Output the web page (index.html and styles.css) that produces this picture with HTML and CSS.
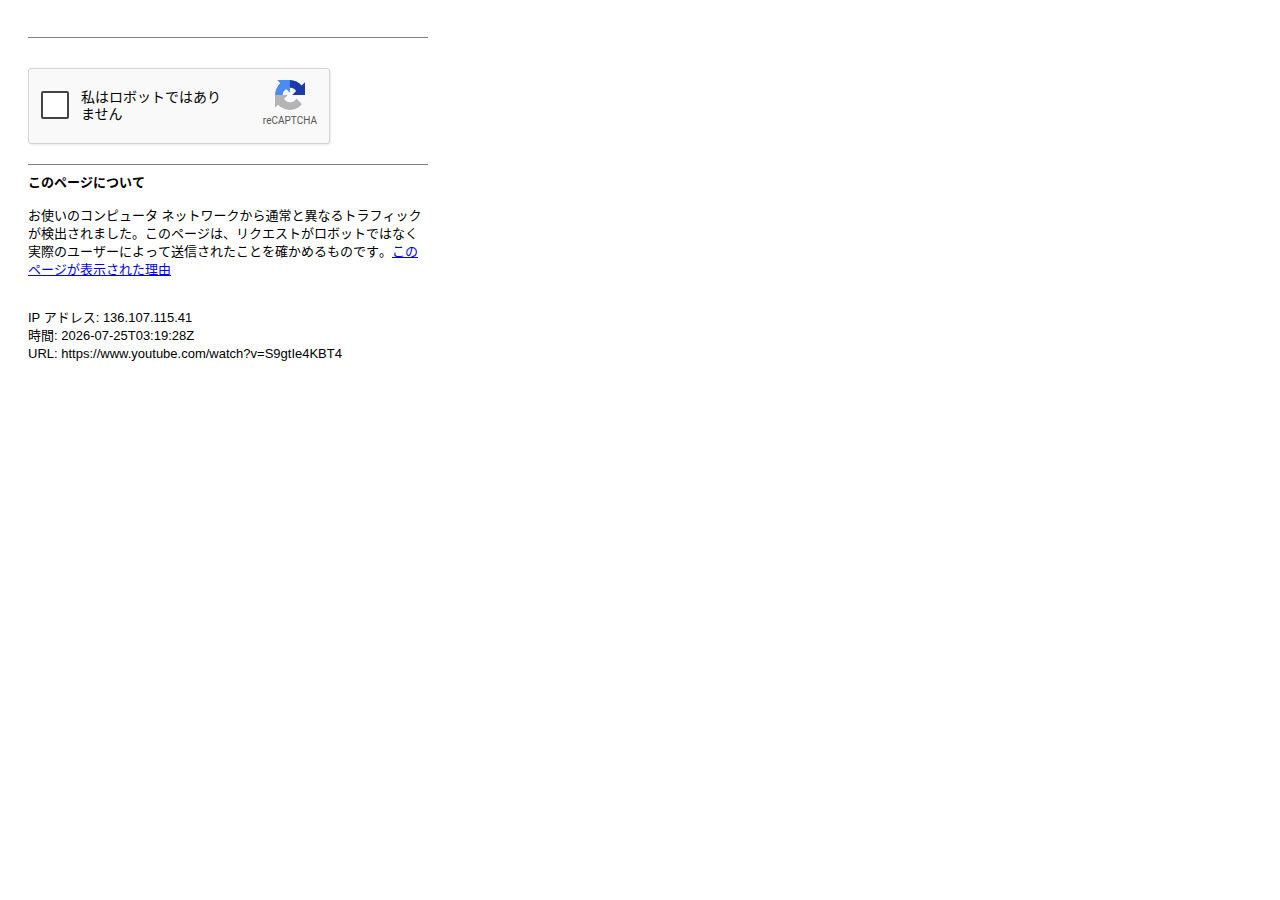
FILE: index.html
```html
<!DOCTYPE html>
<html lang="ja">
<head>
<meta charset="utf-8">
<meta name="viewport" content="width=device-width, initial-scale=1">
<title>https://www.youtube.com/watch?v=S9gtIe4KBT4</title>
<link rel="stylesheet" href="styles.css">
</head>
<body>
<main class="page">
  <hr class="rule">
  <form class="captcha">
    <input class="captcha-box" type="checkbox" id="robot">
    <label class="captcha-label" for="robot">私はロボットではありません</label>
    <div class="brand">
      <svg class="brand-logo" viewBox="0 0 64 64" aria-hidden="true">
        <path fill="#1c3aa9" d="M64 31.955l-.033-1.37V4.687l-7.16 7.16C50.948 4.674 42.033.093 32.05.093c-10.4 0-19.622 4.96-25.458 12.64l11.736 11.86a15.55 15.55 0 0 1 4.754-5.334c2.05-1.6 4.952-2.906 8.968-2.906.485 0 .86.057 1.135.163 4.976.393 9.288 3.14 11.828 7.124l-8.307 8.307L64 31.953"/>
        <path fill="#4a8cf0" d="M31.862.094l-1.37.033H4.594l7.16 7.16C4.58 13.147 0 22.06 0 32.046c0 10.4 4.96 19.622 12.64 25.458L24.5 45.768a15.55 15.55 0 0 1-5.334-4.754c-1.6-2.05-2.906-4.952-2.906-8.968 0-.485.057-.86.163-1.135.393-4.976 3.14-9.288 7.124-11.828l8.307 8.307L31.86.095"/>
        <path fill="#b4b4b4" d="M.001 32.045l.033 1.37v25.898l7.16-7.16c5.86 7.173 14.774 11.754 24.76 11.754 10.4 0 19.622-4.96 25.458-12.64l-11.736-11.86a15.55 15.55 0 0 1-4.754 5.334c-2.05 1.6-4.952 2.906-8.968 2.906-.485 0-.86-.057-1.135-.163-4.976-.393-9.288-3.14-11.828-7.124l8.307-8.307L0 32.047"/>
      </svg>
      <span class="brand-name">reCAPTCHA</span>
    </div>
  </form>
  <hr class="rule">
  <section class="about">
    <h1 class="title">このページについて</h1>
    <p class="text">お使いのコンピュータ ネットワークから通常と異なるトラフィックが検出されました。このページは、リクエストがロボットではなく実際のユーザーによって送信されたことを確かめるものです。<a href="#why">このページが表示された理由</a></p>
    <p class="details">IP アドレス: 136.107.115.41<br>時間: 2026-07-25T03:19:28Z<br>URL: https://www.youtube.com/watch?v=S9gtIe4KBT4</p>
  </section>
</main>
</body>
</html>
```
FILE: styles.css
```css
* { box-sizing: border-box; }
body {
  margin: 0;
  padding: 37px 28px 20px;
  background: #fff;
  color: #000;
  font-family: "Liberation Sans", "Noto Sans CJK JP", sans-serif;
  font-size: 13px;
  line-height: 18px;
}
.page { max-width: 400px; }
.rule {
  height: 1px;
  margin: 0;
  border: 0;
  background: #808080;
}
.captcha {
  display: flex;
  align-items: center;
  max-width: 302px;
  min-height: 76px;
  margin: 30px 0 20px;
  padding: 10px 12px 12px;
  border: 1px solid #d3d3d3;
  border-radius: 3px;
  background: #f9f9f9;
  box-shadow: 1px 1px 2px rgba(0, 0, 0, 0.08);
}
.captcha-box {
  appearance: none;
  flex: none;
  width: 28px;
  height: 28px;
  margin: 0 12px 0 0;
  border: 2px solid #444;
  border-radius: 2px;
  background: #fff;
}
.captcha-label {
  width: 152px;
  padding-top: 1px;
  font-size: 14px;
  line-height: 17px;
}
.brand {
  display: flex;
  flex-direction: column;
  align-items: center;
  gap: 3px;
  align-self: flex-start;
  padding-top: 1px;
  margin-left: auto;
  color: #555;
}
.brand-logo { width: 30px; height: 30px; }
.brand-name {
  font-family: Roboto, sans-serif;
  font-size: 10px;
  line-height: 16px;
  font-kerning: none;
}
.title {
  margin: 9px 0 15px;
  font-size: 13px;
  line-height: 18px;
}
.title,
.text {
  font-kerning: none;
}
.text { margin: 0 0 30px; }
.details { margin: 0; }
```
